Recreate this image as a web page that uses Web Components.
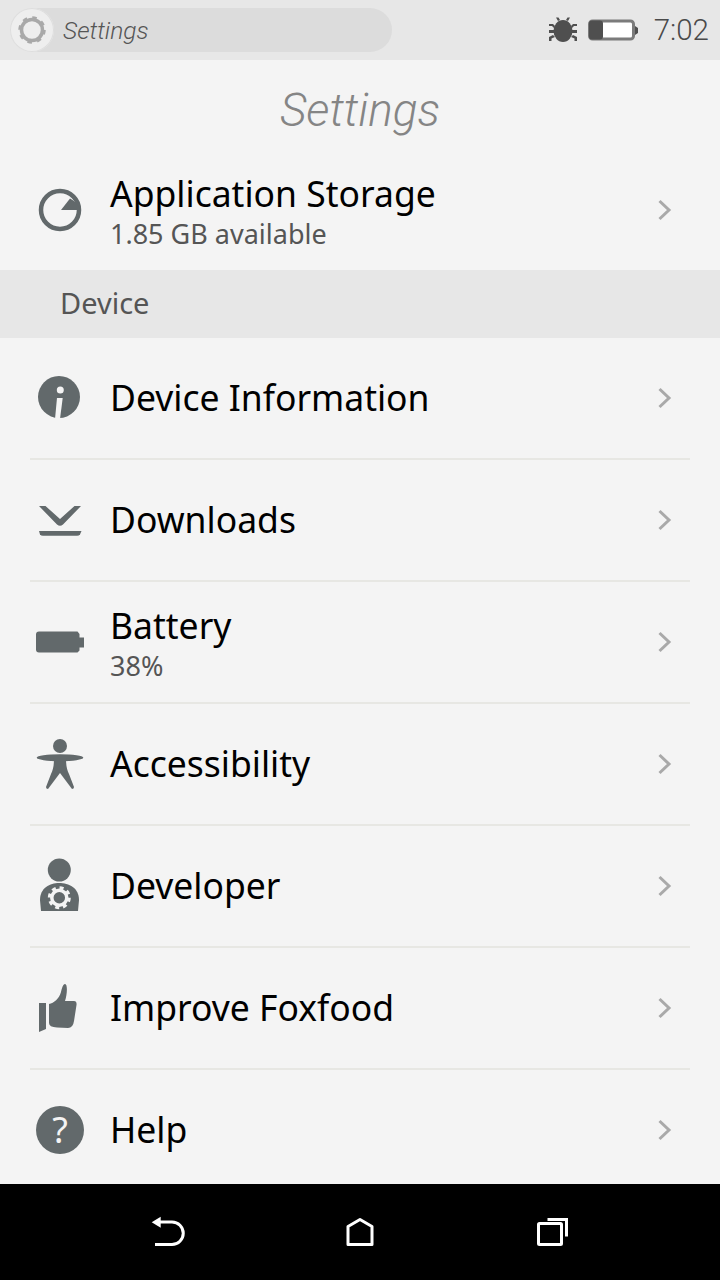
<!DOCTYPE html>
<html>
<head>
<meta charset="utf-8">
<title>Settings</title>
<style>
  html, body { margin: 0; height: 100%; }
  body { font-family: "Noto Sans", Roboto, sans-serif; background: #f4f4f4; }
</style>
</head>
<body>
<phone-shell>
  <status-bar>Settings</status-bar>
  <page-title>Settings</page-title>
  <settings-row icon="storage" flush>Application Storage<span slot="sub">1.85 GB available</span></settings-row>
  <section-header>Device</section-header>
  <settings-row icon="info">Device Information</settings-row>
  <settings-row icon="download">Downloads</settings-row>
  <settings-row icon="battery">Battery<span slot="sub">38%</span></settings-row>
  <settings-row icon="access">Accessibility</settings-row>
  <settings-row icon="developer">Developer</settings-row>
  <settings-row icon="thumb">Improve Foxfood</settings-row>
  <settings-row icon="help">Help</settings-row>
  <nav-bar slot="nav"></nav-bar>
</phone-shell>

<script>
// icons are drawn around 0,0 so the row only has to centre them
const ICONS = {
  storage: `<circle r="19" fill="none" stroke="#62696b" stroke-width="4.5"/>
    <path d="M1 0L10-11.5A20 20 0 0 1 20 0Z"/>`,
  info: `<circle cx="-1" cy="-1" r="21"/>
    <circle cx=".3" cy="-8" r="3.5" fill="#f4f4f4"/>
    <path d="M-3 0H2.7L0 21H-5Z" fill="#f4f4f4"/>`,
  download: `<path d="M-21-14H-14.5L0-1 14.5-14H21L3 4.5Q0 7-3 4.5Z"/>
    <path d="M-21 11H21.5L20 14.5Q19 15.7 17 15.7H-17Q-19 15.7-20 14.5Z"/>`,
  battery: `<path d="M-21-10.5H17.5L19.5-8V-4.5H24V5.5H19.5V8.5L17.5 10.5H-21Q-24 10.5-24 7.5V-7.5Q-24-10.5-21-10.5Z"/>`,
  access: `<circle cy="-18" r="7"/>
    <ellipse cy="-6.3" rx="23.3" ry="3.5"/>
    <path d="M-6-6H6C6 2 7 6 9 10L14 23Q14 25 12 25L0 9-12 25Q-14 25-14 23L-9 10C-7 6-6 2-6-6Z"/>`,
  developer: `<circle cx="-.7" cy="-16" r="11.5"/>
    <path d="M-19 25L-20 14C-20 2-10-3-1-3 9-3 19 2 19 14L18 25Z"/>
    <circle cx="-.7" cy="11.7" r="7.5" fill="none" stroke="#f4f4f4" stroke-width="3.5"/>
    <circle cx="-.7" cy="11.7" r="10" fill="none" stroke="#f4f4f4" stroke-width="3" stroke-dasharray="4 3.85"/>`,
  thumb: `<path d="M-21-5H-14V21L-21 24Z"/>
    <path d="M-11-4C-6-5-1-9 1-16 2-20 3-24 5-24 8-24 7-12 5-7H14Q17-7 16.5-3L14 13Q13 20 8 20L-3 19.5Q-11 19-11 15Z"/>`,
  help: `<circle r="24"/>
    <text y="13" text-anchor="middle" font-family="Noto Sans, sans-serif" font-size="36" fill="#f4f4f4">?</text>`,
};

class PhoneShell extends HTMLElement {
  constructor() {
    super();
    this.attachShadow({ mode: "open" });
    this.shadowRoot.innerHTML = `
      <style>
        :host { display: flex; flex-direction: column; width: 720px; height: 1280px; overflow: hidden; }
        main { flex: 1; min-height: 0; overflow: hidden; background: #f4f4f4; }
      </style>
      <main><slot></slot></main>
      <slot name="nav"></slot>`;
  }
}

class StatusBar extends HTMLElement {
  constructor() {
    super();
    this.attachShadow({ mode: "open" });
    this.shadowRoot.innerHTML = `
      <style>
        :host { display: flex; align-items: center; height: 60px; background: #e7e7e7; color: #4a4a4a; }
        .pill { display: flex; align-items: center; gap: 9px; width: 382px; height: 44px; margin-left: 10px;
          border-radius: 22px; background: #dcdcdc; font: italic 300 24.600px Roboto, sans-serif; color: #555; }
        .site { flex: none; width: 44px; height: 44px; border-radius: 50%; background: #eeeeee;
          box-shadow: inset 0 0 0 1px #dedede; display: flex; align-items: center; justify-content: center; }
        .tray { display: flex; align-items: center; margin-left: auto; padding-right: 11px; }
        .bug { margin-right: 10px; }
        .time { margin-left: 16px; font: 300 29.500px/60px Roboto, sans-serif; }
      </style>
      <div class="pill">
        <div class="site">
          <svg width="30" height="30" viewBox="-15 -15 30 30">
            <circle r="10.5" fill="none" stroke="#a9a9a9" stroke-width="3.5"/>
            <circle r="12.5" fill="none" stroke="#a9a9a9" stroke-width="2.5" stroke-dasharray="4.5 5.3"/>
          </svg>
        </div>
        <slot></slot>
      </div>
      <div class="tray">
        <svg class="bug" width="30" height="30" viewBox="0 0 30 30" fill="#4f4f4f">
          <ellipse cx="15" cy="16" rx="9.5" ry="11"/>
          <path d="M10 6L8 2.500H10.500L12 5ZM20 6L22 2.500H19.500L18 5ZM1 9H5L7 11 6 13 4 11H1ZM29 9H25L23 11 24 13 26 11H29ZM1 15H6V18H1ZM29 15H24V18H29ZM1 26V22L5 20 7 22 3.500 23.500V26ZM29 26V22L25 20 23 22 26.500 23.500V26Z"/>
        </svg>
        <svg width="50" height="22" viewBox="0 0 50 22">
          <rect x="1.500" y="2" width="44" height="18" rx="3" fill="#fff" stroke="#7b7b7b" stroke-width="3"/>
          <rect x="1" y="1.500" width="14" height="19" rx="3" fill="#4f4f4f"/>
          <path d="M47 7L50 9V14L47 16Z" fill="#4f4f4f"/>
        </svg>
        <span class="time">7:02</span>
      </div>`;
  }
}

class PageTitle extends HTMLElement {
  constructor() {
    super();
    this.attachShadow({ mode: "open" });
    this.shadowRoot.innerHTML = `
      <style>
        :host { display: flex; align-items: center; justify-content: center; height: 100px;
          font: italic 300 46px Roboto, sans-serif; color: #858585; }
      </style>
      <slot></slot>`;
  }
}

class SectionHeader extends HTMLElement {
  constructor() {
    super();
    this.attachShadow({ mode: "open" });
    this.shadowRoot.innerHTML = `
      <style>
        :host { display: flex; align-items: center; box-sizing: border-box; height: 68px; padding: 0 0 3px 60px;
          background: #e7e7e7; font: 29px "Noto Sans", sans-serif; color: #555; }
      </style>
      <slot></slot>`;
  }
}

class SettingsRow extends HTMLElement {
  constructor() {
    super();
    this.attachShadow({ mode: "open" });
  }

  connectedCallback() {
    const hasSub = !!this.querySelector("[slot=sub]");
    this.shadowRoot.innerHTML = `
      <style>
        :host { display: block; padding: 0 30px; }
        .row { display: flex; align-items: center; box-sizing: border-box; height: 122px;
          border-bottom: 2px solid #e7e7e3; }
        :host([flush]) .row { height: 110px; padding-bottom: 10px; border: 0; }
        :host(:last-of-type) .row { border-color: transparent; }
        .icon { flex: none; width: 60px; height: 60px; fill: #62696b; margin-right: 20px; }
        .text { flex: 1; min-width: 0; padding-bottom: 2px; font: 35.500px/40px "Noto Sans", sans-serif; color: #000; }
        .text.two { padding: 6px 0 0; }
        .sub { display: block; margin-top: 1px; font-size: 27px; line-height: 40px; color: #555; }
        .chev { flex: none; margin-right: 17px; }
      </style>
      <div class="row">
        <svg class="icon" viewBox="-30 -30 60 60">${ICONS[this.getAttribute("icon")]}</svg>
        <div class="text ${hasSub ? "two" : ""}"><slot></slot>${hasSub ? `<span class="sub"><slot name="sub"></slot></span>` : ""}</div>
        <svg class="chev" width="16" height="24" viewBox="0 0 16 24">
          <path d="M2.500 3L12 12 2.500 21" fill="none" stroke="#a9a9a9" stroke-width="3"/>
        </svg>
      </div>`;
  }
}

class NavBar extends HTMLElement {
  constructor() {
    super();
    this.attachShadow({ mode: "open" });
    this.shadowRoot.innerHTML = `
      <style>
        :host { display: flex; justify-content: center; align-items: center; gap: 145px; flex: none; height: 96px; background: #000; }
        svg { width: 48px; height: 48px; fill: none; stroke: #fff; stroke-width: 3; }
      </style>
      <svg viewBox="-24 -24 48 48">
        <path d="M-8-10H5A11.250 11.250 0 0 1 5 12.500H-12"/>
        <path d="M-15.300-9.700L-6.300-15.300V-4.300Z" fill="#fff" stroke="none"/>
      </svg>
      <svg viewBox="-24 -24 48 48"><path d="M0-12.500L12-5.500V12.500H-12V-5.500Z" stroke-linejoin="round"/></svg>
      <svg viewBox="-24 -24 48 48">
        <rect x="-14.500" y="-8.500" width="23" height="21" rx="1"/>
        <path d="M-5.500-12.500H13.500V4.500"/>
      </svg>`;
  }
}

customElements.define("phone-shell", PhoneShell);
customElements.define("status-bar", StatusBar);
customElements.define("page-title", PageTitle);
customElements.define("section-header", SectionHeader);
customElements.define("settings-row", SettingsRow);
customElements.define("nav-bar", NavBar);
</script>
</body>
</html>
